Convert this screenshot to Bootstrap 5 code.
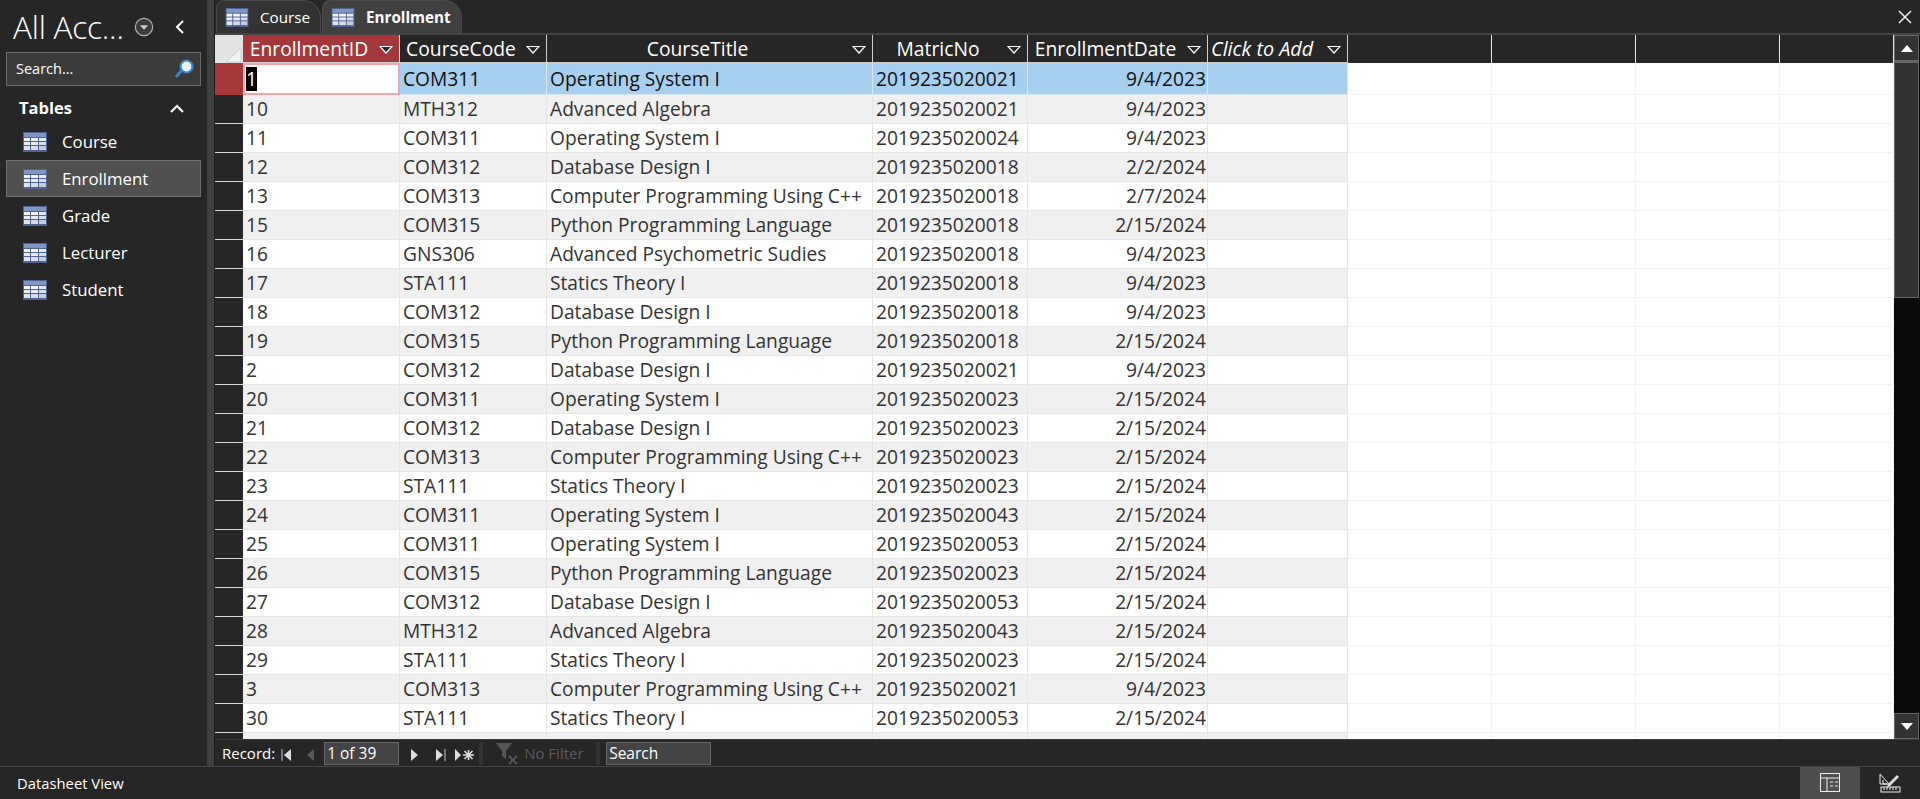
<!DOCTYPE html>
<html lang="en">
<head>
  <meta charset="UTF-8">
  <meta name="viewport" content="width=device-width, initial-scale=1">
  <title>Enrollment</title>
  <link href="https://cdn.jsdelivr.net/npm/bootstrap@5.3.0/dist/css/bootstrap.min.css" rel="stylesheet">
  <style>
    html, body { height: 100%; }
    body {
      background-color: #262626;
      color: #fff;
      font-family: "Open Sans", "Liberation Sans", sans-serif;
      font-size: 16.5px;
      overflow: hidden;
    }
    .app-main { height: 766px; }
    .nav-pane { width: 207px; flex: none; background: #262626; }
    .pane-title { height: 52px; padding-left: 13px; padding-top: 2px; }
    .pane-title span { font-size: 31.5px; line-height: 1; font-weight: 300; letter-spacing: -0.2px; white-space: nowrap; }
    .pane-drop { margin-left: 10px; }
    .pane-back { margin-left: 18px; }
    .pane-search {
      height: 34px; margin: 0 6px; padding: 0 6px 0 9px;
      background: #3a3a3a; border: 1px solid #6b6b6b; font-size: 14.5px;
    }
    .pane-head { height: 37px; padding: 8px 23px 0 19px; font-weight: 700; font-size: 16.5px; }
    .pane-item { height: 37px; margin: 0 6px; padding-left: 16px; gap: 15px; border: 1px solid transparent; font-size: 16.8px; }
    .pane-item.on { background: #505050; border-color: #6f6f6f; }
    .pane-split { width: 8px; flex: none; background: #3f3f3f; border-right: 1px solid #1c1c1c; }
    .doc { min-width: 0; }
    .tabstrip { height: 35px; flex: none; border-bottom: 2px solid #444; padding-left: 1px; gap: 1px; }
    .doc-tab {
      height: 33px; padding: 0 10px 0 8px; gap: 11px; font-size: 15.2px;
      background: #333; border: 1px solid #4a4a4a; border-bottom: 0;
      border-radius: 8px 18px 0 0;
    }
    .doc-tab.on { font-weight: 700; background: #404040; }
    .grid-row { height: 704px; flex: none; }
    .grid-box { overflow: hidden; background: #fff; min-width: 0; }
    .sheet { table-layout: fixed; width: 1679px; margin: 0; border-collapse: separate; border-spacing: 0; }
    .sheet th {
      height: 28px; padding: 1px 6px 0 5px; background: #262626; color: #fff; font-weight: 400;
      font-size: 19.3px; line-height: 26px; border-right: 1px solid #cfcfcf; border-bottom: 1px solid #cfcfcf;
    }
    .sheet td {
      height: 29px; padding: 0 1px 0 3px; color: #333; background: #fff; white-space: nowrap;
      overflow: hidden; font-size: 19.2px; line-height: 28px; box-shadow: none;
      border-right: 1px solid #e6e6e6; border-bottom: 1px solid #e6e6e6;
    }
    .sheet tbody tr:nth-child(even) td { background: #f0f0f0; }
    .sheet tbody tr td.empty { background: #fff; border-color: #f3f3f3; }
    .sheet tbody tr td.rowsel { background: #262626; border-right: 0; border-bottom-color: #d8d8d8; }
    .sheet tbody tr.cur td { background: #a6cff0; color: #111; border-color: #d8e6f2; }
    .sheet tbody tr.cur td.empty { background: #fff; border-color: #f3f3f3; }
    .sheet tbody tr.cur td.rowsel { background: #a4373a; border-color: #a4373a; }
    .sheet tbody tr.cur td.editing { background: #fff; border: 2px solid #f4a5a9; padding-left: 1px; }
    .sheet th.corner { background: #e4e4e4; border: 0; padding: 0; }
    .sheet th.accent { background: #a4373a; }
    .sheet th.blank { border-bottom: 0; border-right-color: #e8e8e8; }
    .sheet th.add-col { padding-left: 3px; }
    .sheet .caret-cell { font-style: italic; font-size: 19.8px; white-space: nowrap; }
    .hd-label { flex: 1; text-align: center; white-space: nowrap; padding-right: 9px; }
    .caret-cell .hd-label { text-align: left; padding-right: 0; }
    .sel-text { background: #000; color: #fff; display: inline-block; line-height: 24px; }
    .scroll-bar { width: 26px; flex: none; background: #0a0a0a; padding-right: 1px; }
    .sb-btn { height: 26px; flex: none; background: #333; border: 1px solid #666; }
    .sb-thumb { height: 237px; flex: none; background: #333; border: 1px solid #666; border-top-width: 2px; }
    .sb-gap { flex: 1; }
    .recbar { height: 27px; flex: none; background: #262626; border-top: 1px solid #3a3a3a; }
    .rec-nav { font-size: 15px; padding-left: 7px; white-space: nowrap; }
    .rec-label { margin-right: 6px; }
    .rec-input {
      height: 23px; background: #444; border: 1px solid #666; line-height: 21px; padding-left: 2px;
    }
    .rec-count { width: 75px; margin: 0 10px 0 0; font-size: 15.5px; }
    .rec-find { width: 105px; margin-left: 6px; font-size: 15.5px; }
    .rec-btn { width: 25px; }
    .rec-btn.narrow { width: 18px; }
    .rec-btn.last { width: 20px; }
    .rec-sep { width: 4px; height: 23px; background: #333; }
    .rec-nofilter { color: #5a5a5a; width: 113px; padding-left: 12px; gap: 3px; }
    .statusbar { height: 33px; border-top: 1px solid #444; font-size: 14.8px; padding-left: 17px; }
    .view-btn { width: 60px; height: 32px; }
    .view-btn.on { background: #4f4f4f; }
  </style>
</head>
<body>

<svg width="0" height="0" class="d-block">
  <defs>
    <symbol id="tblIcon" viewBox="0 0 24 20">
      <rect width="24" height="20" fill="#4f6394"/>
      <rect x="1" y="1" width="22" height="4" fill="#7f95c4"/>
      <rect x="1" y="6" width="6" height="3" fill="#f4f6fb"/><rect x="8" y="6" width="7" height="3" fill="#f4f6fb"/><rect x="16" y="6" width="7" height="3" fill="#e4e9f3"/>
      <rect x="1" y="10" width="6" height="3" fill="#e8ecf5"/><rect x="8" y="10" width="7" height="3" fill="#e8ecf5"/><rect x="16" y="10" width="7" height="3" fill="#d6dcea"/>
      <rect x="1" y="14" width="6" height="4" fill="#dfe4ef"/><rect x="8" y="14" width="7" height="4" fill="#d6dcea"/><rect x="16" y="14" width="7" height="4" fill="#c4cddf"/>
    </symbol>
    <symbol id="hdCaret" viewBox="0 0 14 9">
      <path d="M1 1.5h12L7 8z" fill="#262626" stroke="#fff" stroke-width="1.2"/>
    </symbol>
  </defs>
</svg>

<div class="app-main d-flex">
  <!-- Navigation pane -->
  <aside class="nav-pane d-flex flex-column">
    <div class="pane-title d-flex align-items-center">
      <span>All Acc...</span>
      <svg class="pane-drop" width="20" height="20" viewBox="0 0 22 22"><circle cx="11" cy="11" r="9.5" fill="#3a3a3a" stroke="#bbb" stroke-width="1.2"/><path d="M6.5 9h9L11 14z" fill="#ccc"/></svg>
      <svg class="pane-back" width="16" height="18" viewBox="0 0 16 18"><path d="M11 3 5 9l6 6" fill="none" stroke="#fff" stroke-width="2"/></svg>
    </div>
    <div class="pane-search d-flex align-items-center justify-content-between">
      <span>Search...</span>
      <svg width="20" height="20" viewBox="0 0 20 20"><path d="M8 11 2 18" stroke="#3f83c8" stroke-width="3"/><circle cx="12.5" cy="7.5" r="6" fill="#e8f1fa" stroke="#3f83c8" stroke-width="2.2"/></svg>
    </div>
    <div class="pane-head d-flex align-items-center justify-content-between">
      <span>Tables</span>
      <svg width="14" height="10" viewBox="0 0 14 10"><path d="M1 8l6-6 6 6" fill="none" stroke="#fff" stroke-width="2"/></svg>
    </div>
    <div id="paneList"></div>
  </aside>
  <div class="pane-split"></div>

  <!-- Document area -->
  <div class="doc flex-grow-1 d-flex flex-column">
    <div class="tabstrip d-flex align-items-end">
      <div class="doc-tab d-flex align-items-center"><svg width="24" height="19"><use href="#tblIcon"/></svg>Course</div>
      <div class="doc-tab on d-flex align-items-center"><svg width="24" height="19"><use href="#tblIcon"/></svg>Enrollment</div>
      <svg class="ms-auto align-self-center me-2" width="14" height="14" viewBox="0 0 14 14"><path d="M1 1l12 12M13 1 1 13" stroke="#eee" stroke-width="1.5"/></svg>
    </div>
    <div class="grid-row d-flex">
      <div class="grid-box flex-grow-1">
        <table class="sheet">
          <colgroup id="cols"></colgroup>
          <thead><tr id="headRow"></tr></thead>
          <tbody id="rows"></tbody>
        </table>
      </div>
      <div class="scroll-bar d-flex flex-column">
        <div class="sb-btn d-flex align-items-center justify-content-center"><svg width="12" height="7"><path d="M6 0l6 7H0z" fill="#fff"/></svg></div>
        <div class="sb-thumb"></div>
        <div class="sb-gap"></div>
        <div class="sb-btn d-flex align-items-center justify-content-center"><svg width="12" height="7"><path d="M0 0h12L6 7z" fill="#fff"/></svg></div>
      </div>
    </div>
    <div class="recbar d-flex">
      <div class="rec-nav flex-grow-1 d-flex align-items-center">
        <span class="rec-label">Record:</span>
        <span class="rec-btn"><svg width="12" height="14"><path d="M1 1v12" stroke="#ccc"/><path d="M10 1v12L3 7z" fill="#ddd"/></svg></span>
        <span class="rec-btn narrow"><svg width="10" height="14"><path d="M8 1v12L1 7z" fill="#5a5a5a"/></svg></span>
        <div class="rec-input rec-count">1 of 39</div>
        <span class="rec-btn"><svg width="10" height="14"><path d="M2 1v12l7-6z" fill="#ddd"/></svg></span>
        <span class="rec-btn last"><svg width="12" height="14"><path d="M2 1v12l7-6z" fill="#ddd"/><path d="M11 1v12" stroke="#ccc"/></svg></span>
        <span class="rec-btn"><svg width="24" height="14"><path d="M1 1v12l6-6z" fill="#ddd"/><path d="M9 7h11M14.5 2v10M10.5 3l8 8M18.5 3l-8 8" stroke="#ddd" stroke-width="1.6"/></svg></span>
        <span class="rec-sep"></span>
        <div class="rec-nofilter d-flex align-items-center">
          <svg width="26" height="24" viewBox="0 0 26 24"><path d="M1 2h16l-6 8v8l-4-3v-5z" fill="#555"/><path d="M14 15l8 8M22 15l-8 8" stroke="#555" stroke-width="2"/></svg>
          <span>No Filter</span>
        </div>
        <span class="rec-sep"></span>
        <div class="rec-input rec-find">Search</div>
      </div>
    </div>
  </div>
</div>

<footer class="statusbar d-flex align-items-center justify-content-between">
  <span>Datasheet View</span>
  <div class="d-flex">
    <div class="view-btn on d-flex align-items-center justify-content-center">
      <svg width="20" height="20" viewBox="0 0 20 20" fill="none" stroke="#eee"><rect x=".5" y=".5" width="19" height="18"/><path d="M.5 5h19M7 5v13.5M10 9h3M15 9h3M10 13h3M15 13h3"/></svg>
    </div>
    <div class="view-btn d-flex align-items-center justify-content-center">
      <svg width="22" height="20" viewBox="0 0 22 20" fill="none" stroke="#eee"><path d="M1 1v10h9z"/><path d="M4 7v4h4" /><path d="M9 11l9-9 2 2-9 9-3 1z" fill="#ddd" stroke="none"/><rect x="2" y="14" width="19" height="5"/><path d="M5 14v3M8 14v3M11 14v3M14 14v3M17 14v3"/></svg>
    </div>
  </div>
</footer>

<script>
  const tables = ['Course', 'Enrollment', 'Grade', 'Lecturer', 'Student']
  document.getElementById('paneList').innerHTML = tables.map(t => `
    <div class="pane-item d-flex align-items-center ${t === 'Enrollment' ? 'on' : ''}">
      <svg width="24" height="20"><use href="#tblIcon"/></svg><span>${t}</span>
    </div>`).join('')

  const widths = [28, 157, 147, 326, 155, 180, 140, 144, 144, 144, 114]
  document.getElementById('cols').innerHTML = widths.map(w => `<col style="width:${w}px">`).join('')

  const heads = ['EnrollmentID', 'CourseCode', 'CourseTitle', 'MatricNo', 'EnrollmentDate']
  const caret = '<svg width="14" height="9" class="flex-shrink-0"><use href="#hdCaret"/></svg>'
  let headHtml = '<th class="corner"><svg width="28" height="28" class="d-block"><path d="M11 27 26 13v14z" fill="#f2f2f2" stroke="#c4cfe0"/></svg></th>'
  heads.forEach((h, i) => {
    headHtml += `<th class="${i === 0 ? 'accent' : ''}"><div class="d-flex align-items-center"><span class="hd-label">${h}</span>${caret}</div></th>`
  })
  headHtml += `<th class="add-col"><div class="d-flex align-items-center caret-cell"><span class="hd-label">Click to Add</span>${caret}</div></th>`
  headHtml += '<th class="blank"></th>'.repeat(4)
  document.getElementById('headRow').innerHTML = headHtml

  const OS = 'Operating System I', DB = 'Database Design I', CP = 'Computer Programming Using C++',
    PY = 'Python Programming Language', ST = 'Statics Theory I', AL = 'Advanced Algebra'
  const data = [
    ['1', 'COM311', OS, '021', '9/4/2023'], ['10', 'MTH312', AL, '021', '9/4/2023'],
    ['11', 'COM311', OS, '024', '9/4/2023'], ['12', 'COM312', DB, '018', '2/2/2024'],
    ['13', 'COM313', CP, '018', '2/7/2024'], ['15', 'COM315', PY, '018', '2/15/2024'],
    ['16', 'GNS306', 'Advanced Psychometric Sudies', '018', '9/4/2023'], ['17', 'STA111', ST, '018', '9/4/2023'],
    ['18', 'COM312', DB, '018', '9/4/2023'], ['19', 'COM315', PY, '018', '2/15/2024'],
    ['2', 'COM312', DB, '021', '9/4/2023'], ['20', 'COM311', OS, '023', '2/15/2024'],
    ['21', 'COM312', DB, '023', '2/15/2024'], ['22', 'COM313', CP, '023', '2/15/2024'],
    ['23', 'STA111', ST, '023', '2/15/2024'], ['24', 'COM311', OS, '043', '2/15/2024'],
    ['25', 'COM311', OS, '053', '2/15/2024'], ['26', 'COM315', PY, '023', '2/15/2024'],
    ['27', 'COM312', DB, '053', '2/15/2024'], ['28', 'MTH312', AL, '043', '2/15/2024'],
    ['29', 'STA111', ST, '023', '2/15/2024'], ['3', 'COM313', CP, '021', '9/4/2023'],
    ['30', 'STA111', ST, '053', '2/15/2024'], ['', '', '', '', '2/15/2024']
  ]
  const empties = '<td class="empty"></td>'.repeat(4)
  document.getElementById('rows').innerHTML = data.map((r, i) => {
    const first = i === 0 ? '<td class="editing"><span class="sel-text">1</span></td>' : `<td>${r[0]}</td>`
    const matric = r[3] ? '2019235020' + r[3] : ''
    return `<tr class="${i === 0 ? 'cur' : ''}"><td class="rowsel"></td>${first}<td>${r[1]}</td><td>${r[2]}</td><td>${matric}</td><td class="text-end">${r[4]}</td><td></td>${empties}</tr>`
  }).join('')
</script>
<script src="https://cdn.jsdelivr.net/npm/bootstrap@5.3.0/dist/js/bootstrap.bundle.min.js"></script>
</body>
</html>
